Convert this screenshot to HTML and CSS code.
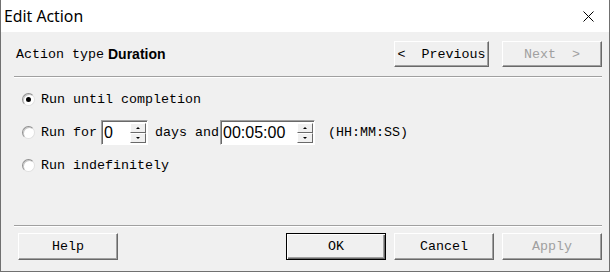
FILE: index.html
```html
<!DOCTYPE html>
<html lang="en">
<head>
    <meta charset="UTF-8">
    <title>Edit Action</title>
    <link rel="stylesheet" href="styles.css">
</head>
<body>
    <div class="window">
        <div class="titlebar">
            <span class="title">Edit Action</span>
            <svg class="close" width="11" height="11" viewBox="0 0 11 11">
                <path d="M0.5 0.5 L10.5 10.5 M10.5 0.5 L0.5 10.5" stroke="#000" stroke-width="1" fill="none"/>
            </svg>
        </div>

        <div class="panel">
            <div class="header">
                <span class="label">Action type</span>
                <span class="type-name">Duration</span>
                <span class="spacer"></span>
                <button class="btn btn-prev">&lt;&nbsp;&nbsp;Previous</button>
                <button class="btn btn-next" disabled>Next&nbsp;&nbsp;&gt;</button>
            </div>

            <div class="separator"></div>

            <div class="options">
                <label class="option">
                    <span class="radio checked"></span>
                    <span>Run until completion</span>
                </label>
                <label class="option">
                    <span class="radio"></span>
                    <span>Run for</span>
                    <span class="spinbox days">
                        <span class="spin-text">0</span>
                        <span class="spin-buttons">
                            <span class="spin-btn"><span class="arrow-up"></span></span>
                            <span class="spin-btn"><span class="arrow-down"></span></span>
                        </span>
                    </span>
                    <span class="days-label">days and</span>
                    <span class="spinbox time">
                        <span class="spin-text">00:05:00</span>
                        <span class="spin-buttons">
                            <span class="spin-btn"><span class="arrow-up"></span></span>
                            <span class="spin-btn"><span class="arrow-down"></span></span>
                        </span>
                    </span>
                    <span class="format">(HH:MM:SS)</span>
                </label>
                <label class="option">
                    <span class="radio"></span>
                    <span>Run indefinitely</span>
                </label>
            </div>

            <div class="grow"></div>

            <div class="separator"></div>

            <div class="footer">
                <button class="btn btn-help">Help</button>
                <span class="spacer"></span>
                <button class="btn btn-default">OK</button>
                <button class="btn">Cancel</button>
                <button class="btn" disabled>Apply</button>
            </div>
        </div>
    </div>
</body>
</html>
```

FILE: styles.css
```css
* {
    box-sizing: border-box;
    margin: 0;
    padding: 0;
}

body {
    width: 610px;
    height: 272px;
    overflow: hidden;
    background: #fff;
    font-family: "Liberation Mono", monospace;
    font-size: 13.33px;
    color: #000;
}

/* Window frame */
.window {
    height: 272px;
    display: flex;
    flex-direction: column;
    border: 1px solid #707070;
    border-top: none;
}

.titlebar {
    height: 32px;
    flex-shrink: 0;
    background: #fff;
    display: flex;
    align-items: center;
    justify-content: space-between;
    padding: 0 15px 0 3px;
}

.title {
    font-family: "Noto Sans", sans-serif;
    font-size: 15.8px;
    color: #000;
}

.panel {
    flex: 1;
    background: #f0f0f0;
    display: flex;
    flex-direction: column;
    padding: 9px 7px 11px 13px;
}

/* Header row */
.header {
    display: flex;
    align-items: center;
    height: 26px;
}

.header .label {
    margin-left: 2px;
    margin-right: 4px;
}

.type-name {
    font-family: "Liberation Sans", sans-serif;
    font-weight: bold;
    font-size: 14px;
}

.spacer {
    flex: 1;
}

.separator {
    height: 2px;
    border-top: 1px solid #a0a0a0;
    border-bottom: 1px solid #fff;
    flex-shrink: 0;
}

.header + .separator {
    margin-top: 9px;
}

/* Buttons */
.btn {
    font-family: "Liberation Mono", monospace;
    font-size: 13.33px;
    color: #000;
    background: #f0f0f0;
    width: 100px;
    height: 27px;
    border: 1px solid;
    border-color: #fff #696969 #696969 #fff;
    box-shadow: inset -1px -1px #a0a0a0;
    white-space: pre;
}

.btn:disabled {
    color: #a0a0a0;
}

.btn-prev {
    width: 95px;
    height: 26px;
    margin-right: 13px;
}

.btn-next {
    height: 26px;
}

.btn-default {
    border: 1px solid #000;
    box-shadow: inset 1px 1px #fff, inset -1px -1px #696969, inset -2px -2px #a0a0a0;
}

/* Options */
.options {
    padding-top: 5px;
    padding-left: 8px;
}

.option {
    display: flex;
    align-items: center;
    height: 33px;
}

.radio {
    width: 13px;
    height: 13px;
    border-radius: 50%;
    background: #fff;
    border: 1px solid;
    border-color: #909090 #e0e0e0 #e0e0e0 #909090;
    box-shadow: inset 1px 1px #c8c8c8;
    margin-right: 6px;
    display: flex;
    align-items: center;
    justify-content: center;
}

.radio.checked::after {
    content: "";
    width: 5px;
    height: 5px;
    border-radius: 50%;
    background: #000;
}

.spinbox {
    display: flex;
    height: 25px;
    background: #fff;
    border: 1px solid;
    border-color: #a0a0a0 #fff #fff #a0a0a0;
    box-shadow: inset 1px 1px #696969;
    padding: 2px 1px 1px 2px;
}

.spinbox.days {
    width: 47px;
    margin-left: 4px;
}

.spinbox.time {
    width: 95px;
    margin-left: 1px;
}

.spin-text {
    flex: 1;
    font-family: "Liberation Sans", sans-serif;
    font-size: 16px;
    line-height: 20px;
}

.spin-buttons {
    width: 16px;
    display: flex;
    flex-direction: column;
}

.spin-btn {
    flex: 1;
    background: #f0f0f0;
    border: 1px solid;
    border-color: #fff #696969 #696969 #fff;
    display: flex;
    align-items: center;
    justify-content: center;
}

.arrow-up {
    width: 0;
    height: 0;
    border-left: 2px solid transparent;
    border-right: 2px solid transparent;
    border-bottom: 2px solid #000;
}

.arrow-down {
    width: 0;
    height: 0;
    border-left: 2px solid transparent;
    border-right: 2px solid transparent;
    border-top: 2px solid #000;
}

.days-label {
    margin-left: 7px;
}

.format {
    margin-left: 13px;
}

.grow {
    flex: 1;
}

/* Footer */
.footer {
    display: flex;
    gap: 8px;
    margin-top: 6px;
}

.btn-help {
    margin-left: 4px;
}
```
